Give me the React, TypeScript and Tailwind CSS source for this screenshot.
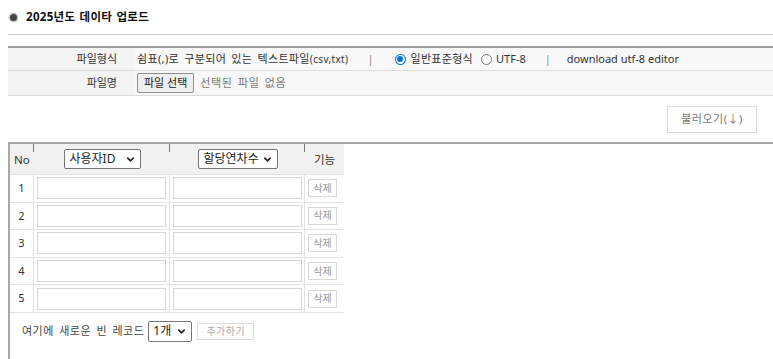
import { ChevronDown } from "lucide-react";

const font = "font-['Noto_Sans','Noto_Sans_CJK_KR',sans-serif]";

function Radio({ checked }: { checked?: boolean }) {
  return checked ? (
    <span className="inline-flex h-[11px] w-[11px] items-center justify-center rounded-full bg-[#0075d8]">
      <span className="h-[9px] w-[9px] rounded-full bg-white flex items-center justify-center">
        <span className="h-[6px] w-[6px] rounded-full bg-[#0075d8]" />
      </span>
    </span>
  ) : (
    <span className="inline-block h-[11px] w-[11px] rounded-full border border-[#777] bg-white" />
  );
}

function HeadSelect({ label, w }: { label: string; w: string }) {
  return (
    <div
      className={`${w} h-[20px] flex items-center justify-between border border-[#767676] rounded-[2px] bg-white pl-[5px] pr-[4px] text-[12px] text-[#222]`}
    >
      <span>{label}</span>
      <ChevronDown size={11} strokeWidth={3.5} className="text-[#222]" />
    </div>
  );
}

export default function App() {
  const rows = [1, 2, 3, 4, 5];

  return (
    <div className={`${font} w-[773px] h-[359px] overflow-hidden bg-white text-[11px] text-[#333]`}>
      {/* Title */}
      <div className="h-[34px] flex items-center pl-[10px] gap-[9px]">
        <span className="h-[7px] w-[7px] rounded-full bg-[#444] ring-[1.5px] ring-[#c8c8c8]" />
        <span className="font-bold text-[11.5px] tracking-[0.3px] [word-spacing:1px] text-[#111]">
          2025년도 데이타 업로드
        </span>
      </div>
      <div className="ml-[8px] border-t border-[#d0d0d0]" />

      {/* File info */}
      <div className="ml-[8px] mt-[11px] border-t-[2px] border-[#9a9a9a]">
        <div className="flex h-[23px] border-b border-[#dcdcdc] bg-[#f4f4f4]">
          <div className="w-[125px] flex items-center justify-end pr-[16px] text-[#333]">파일형식</div>
          <div className="flex-1 flex items-center pl-[4px] bg-[#f8f8f8]">
            <span className="tracking-[0.35px] [word-spacing:2px]">
              쉼표(,)로 구분되어 있는 텍스트파일<span className="text-[10px]">(csv,txt)</span>
            </span>
            <span className="ml-[19px] text-[#888]">|</span>
            <span className="ml-[21px] flex items-center gap-[5px]">
              <Radio checked />
              <span className="tracking-[0.3px]">일반표준형식</span>
            </span>
            <span className="ml-[8px] flex items-center gap-[4px]">
              <Radio />
              <span>UTF-8</span>
            </span>
            <span className="ml-[19px] text-[#888]">|</span>
            <span className="ml-[16px]">download utf-8 editor</span>
          </div>
        </div>
        <div className="flex h-[25px] border-b border-[#dcdcdc] bg-[#f4f4f4]">
          <div className="w-[125px] flex items-center justify-end pr-[16px] text-[#333]">파일명</div>
          <div className="flex-1 flex items-center pl-[4px] bg-[#f8f8f8]">
            <span className="h-[20px] px-[6px] flex items-center border border-[#8f8f8f] rounded-[2px] bg-[#efefef] text-[#222]">
              파일 선택
            </span>
            <span className="ml-[6px] text-[#777] tracking-[0.6px] [word-spacing:2px]">선택된 파일 없음</span>
          </div>
        </div>
      </div>

      {/* Load button */}
      <div className="flex justify-end pr-[16px] pt-[10px] h-[46px]">
        <button className="h-[27px] w-[90px] border border-[#dcdcdc] bg-white text-[#777] text-[11px] tracking-[0.5px]">
          불러오기(↓)
        </button>
      </div>

      {/* Grid box */}
      <div className="ml-[8px] border-t-[2px] border-l-[2px] border-[#a8a8a8] h-[220px]">
        <div className="w-[334px] grid grid-cols-[24px_136px_135px_39px] grid-rows-[30px_repeat(5,27.6px)]">
          {/* header */}
          <div className="relative bg-[#f1f1f1] flex items-center pl-[4px] pt-[2px] text-[11.5px] text-[#333]">
            No
            <span className="absolute right-0 top-0 h-[8px] border-r border-[#777]" />
          </div>
          <div className="relative bg-[#f1f1f1] flex items-center justify-center">
            <HeadSelect label="사용자ID" w="w-[77px]" />
            <span className="absolute right-0 top-0 h-[8px] border-r border-[#777]" />
          </div>
          <div className="relative bg-[#f1f1f1] flex items-center justify-center">
            <HeadSelect label="할당연차수" w="w-[80px]" />
            <span className="absolute right-0 top-0 h-[8px] border-r border-[#777]" />
          </div>
          <div className="bg-[#f1f1f1] flex items-center justify-center pt-[2px] text-[11.5px] text-[#333]">기능</div>

          {rows.map((n) => (
            <>
              <div key={`n${n}`} className="border-t border-r border-[#e2e2e2] flex items-center justify-center text-[11px] text-[#333]">
                {n}
              </div>
              <div key={`a${n}`} className="border-t border-r border-[#e2e2e2] flex items-center pl-[3px]">
                <div className="w-[129px] h-[22px] border border-[#d6d6d6] bg-white" />
              </div>
              <div key={`b${n}`} className="border-t border-r border-[#e2e2e2] flex items-center pl-[3px]">
                <div className="w-[129px] h-[22px] border border-[#d6d6d6] bg-white" />
              </div>
              <div key={`c${n}`} className="border-t border-[#e2e2e2] flex items-center pl-[3px]">
                <span className="h-[18px] w-[29px] flex items-center justify-center border border-[#d8d8d8] text-[10px] text-[#999]">
                  삭제
                </span>
              </div>
            </>
          ))}
        </div>
        <div className="w-[334px] border-t border-[#e2e2e2] flex items-center pl-[12px] pt-[8px]">
          <span className="text-[#444] tracking-[0.5px] [word-spacing:2px]">여기에 새로운 빈 레코드</span>
          <span className="ml-[4px] h-[21px] w-[44px] flex items-center justify-between border border-[#767676] rounded-[2px] pl-[4px] pr-[4px] text-[12px] text-[#222]">
            1개
            <ChevronDown size={11} strokeWidth={3.5} />
          </span>
          <span className="ml-[5px] h-[17px] w-[57px] flex items-center justify-center border border-[#dcdcdc] text-[10px] text-[#aaa] tracking-[0.5px]">
            추가하기
          </span>
        </div>
      </div>
    </div>
  );
}
